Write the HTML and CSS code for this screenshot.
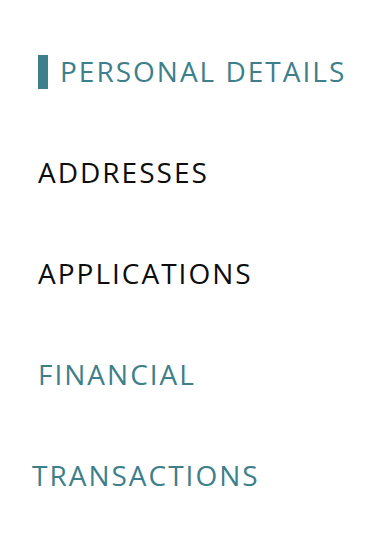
FILE: index.html
```html
<!DOCTYPE html>
<html>
<head>
<meta charset="utf-8">
<link rel="stylesheet" href="styles.css">
</head>
<body>
<nav class="menu">
  <a class="item active">PERSONAL DETAILS</a>
  <a class="item">ADDRESSES</a>
  <a class="item">APPLICATIONS</a>
  <a class="item teal">FINANCIAL</a>
  <a class="item teal shift">TRANSACTIONS</a>
</nav>
</body>
</html>
```
FILE: styles.css
```css
html, body {
  margin: 0;
  padding: 0;
  background: #ffffff;
}
.menu {
  display: flex;
  flex-direction: column;
  gap: 67px;
  padding: 55px 0 0 38px;
  font-family: "Open Sans", sans-serif;
}
.item {
  box-sizing: border-box;
  display: flex;
  align-items: center;
  height: 34px;
  padding-bottom: 3px;
  font-size: 28px;
  font-weight: 400;
  letter-spacing: 2px;
  color: #0d0d0d;
  text-decoration: none;
  white-space: nowrap;
}
.item.active {
  color: #3d7f8a;
  border-left: 10px solid #3d7f8a;
  padding-left: 12px;
}
.item.teal {
  color: #3d7f8a;
}
.item.shift {
  margin-left: -6px;
}
```
